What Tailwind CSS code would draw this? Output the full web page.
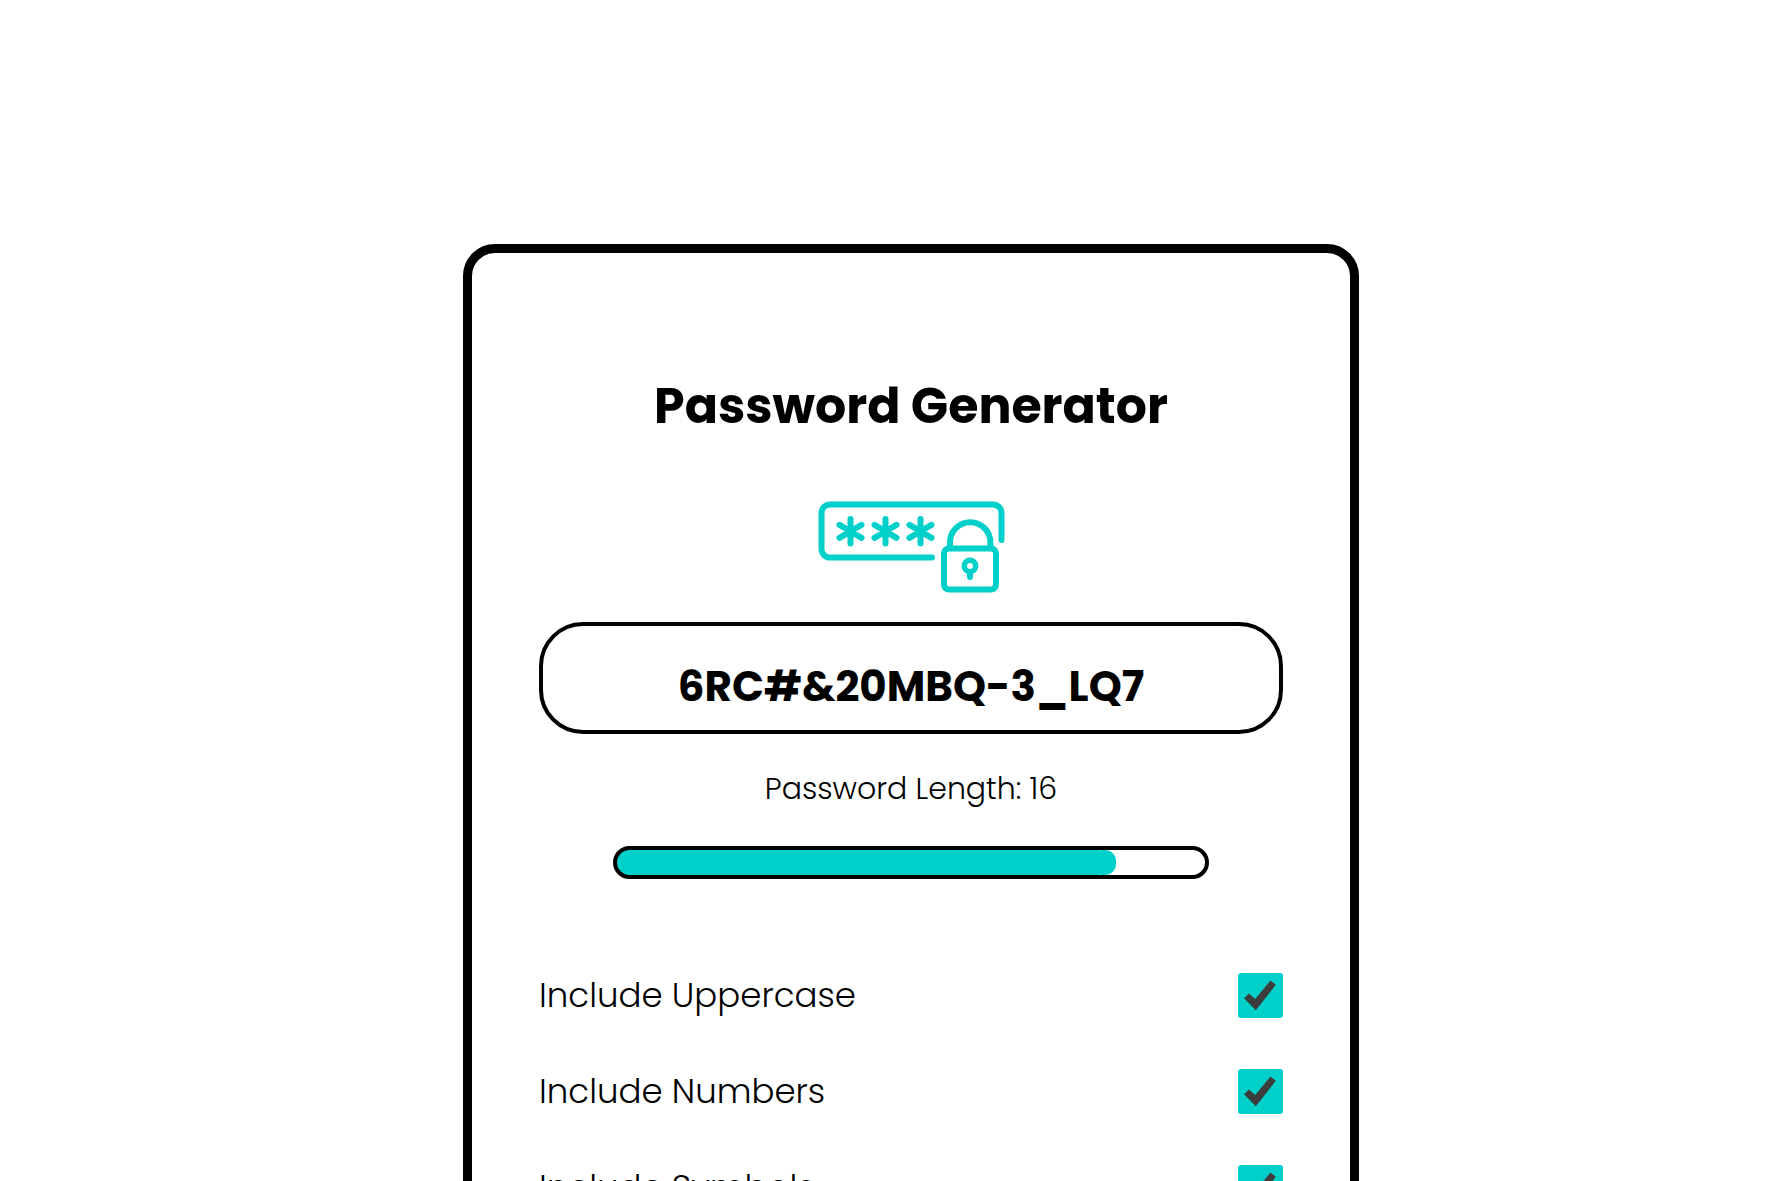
<!DOCTYPE html>
<html lang="en">
<head>
<meta charset="utf-8">
<meta name="viewport" content="width=device-width, initial-scale=1">
<title>Password Generator</title>
<script src="https://cdn.jsdelivr.net/npm/@tailwindcss/browser@4"></script>
</head>
<body class="bg-white text-black font-[Poppins,Inter,sans-serif]">
<main class="h-screen overflow-hidden pl-[50px] pt-[244px]">
  <form class="mx-auto flex w-full max-w-[896px] flex-col items-center rounded-[32px] border-[9px] border-black px-[67px] pt-[115px] pb-24">
    <h1 class="text-[49px] leading-[76px] font-bold whitespace-nowrap">Password Generator</h1>
    <svg class="mt-[57px] h-[92px] w-[190px]" viewBox="-2 0 190 92" fill="none" stroke="#00d0ca" stroke-width="6" stroke-linecap="round" stroke-linejoin="round" aria-hidden="true">
      <path d="M114 56.500H12a8.500 8.500 0 0 1-8.500-8.500V12A8.500 8.500 0 0 1 12 3.500H175A8.500 8.500 0 0 1 183.500 12V39"/>
      <path d="M32.500 18V42.500M21.500 23.800l22 13M43.500 23.800l-22 13M67.500 18V42.500M56.500 23.800l22 13M78.500 23.800l-22 13M102.500 18V42.500M91.500 23.800l22 13M113.500 23.800l-22 13"/>
      <rect x="126" y="47.500" width="52" height="41" rx="5"/>
      <path d="M132 47V41.500a20.200 20.200 0 0 1 40.400 0V47"/>
      <circle cx="152" cy="65" r="5.700" stroke-width="5.500"/>
      <path d="M152 71V76"/>
    </svg>
    <input type="text" readonly aria-label="Generated password" value="6RC#&amp;20MBQ-3_LQ7" class="mt-[29px] h-[112px] w-full rounded-[44px] border-4 border-black pt-4 text-center text-[42px] font-bold outline-none">
    <label for="length" class="mt-[35px] text-[30px] leading-10 font-light">Password Length: 16</label>
    <input id="length" type="range" min="0" max="19" value="16" class="mt-[37px] h-[33px] w-4/5 appearance-none overflow-hidden rounded-full border-4 border-black bg-[linear-gradient(to_right,#00d0ca_82%,white_82%)] [&::-webkit-slider-thumb]:h-[25px] [&::-webkit-slider-thumb]:w-[25px] [&::-webkit-slider-thumb]:appearance-none [&::-webkit-slider-thumb]:rounded-[11px] [&::-webkit-slider-thumb]:bg-[#00d0ca]">
    <div class="mt-[94px] flex w-full flex-col gap-[51px] text-[34px] font-light">
      <div class="flex h-[45px] items-center justify-between">
        <label for="uppercase">Include Uppercase</label>
        <span class="grid size-[45px]">
          <input id="uppercase" type="checkbox" checked class="peer col-start-1 row-start-1 size-[45px] appearance-none rounded-[3px] bg-[#00d0ca]">
          <svg class="pointer-events-none invisible col-start-1 row-start-1 size-[45px] peer-checked:visible" viewBox="0 0 45 45" fill="#3d3d3d" aria-hidden="true"><path d="M6 25.200L11 20.500l6.200 5.500L32.500 7.500l5.300 4.300L17.800 37.200z"/></svg>
        </span>
      </div>
      <div class="flex h-[45px] items-center justify-between">
        <label for="numbers">Include Numbers</label>
        <span class="grid size-[45px]">
          <input id="numbers" type="checkbox" checked class="peer col-start-1 row-start-1 size-[45px] appearance-none rounded-[3px] bg-[#00d0ca]">
          <svg class="pointer-events-none invisible col-start-1 row-start-1 size-[45px] peer-checked:visible" viewBox="0 0 45 45" fill="#3d3d3d" aria-hidden="true"><path d="M6 25.200L11 20.500l6.200 5.500L32.500 7.500l5.300 4.300L17.800 37.200z"/></svg>
        </span>
      </div>
      <div class="flex h-[45px] items-center justify-between">
        <label for="symbols">Include Symbols</label>
        <span class="grid size-[45px]">
          <input id="symbols" type="checkbox" checked class="peer col-start-1 row-start-1 size-[45px] appearance-none rounded-[3px] bg-[#00d0ca]">
          <svg class="pointer-events-none invisible col-start-1 row-start-1 size-[45px] peer-checked:visible" viewBox="0 0 45 45" fill="#3d3d3d" aria-hidden="true"><path d="M6 25.200L11 20.500l6.200 5.500L32.500 7.500l5.300 4.300L17.800 37.200z"/></svg>
        </span>
      </div>
    </div>
  </form>
</main>
</body>
</html>
